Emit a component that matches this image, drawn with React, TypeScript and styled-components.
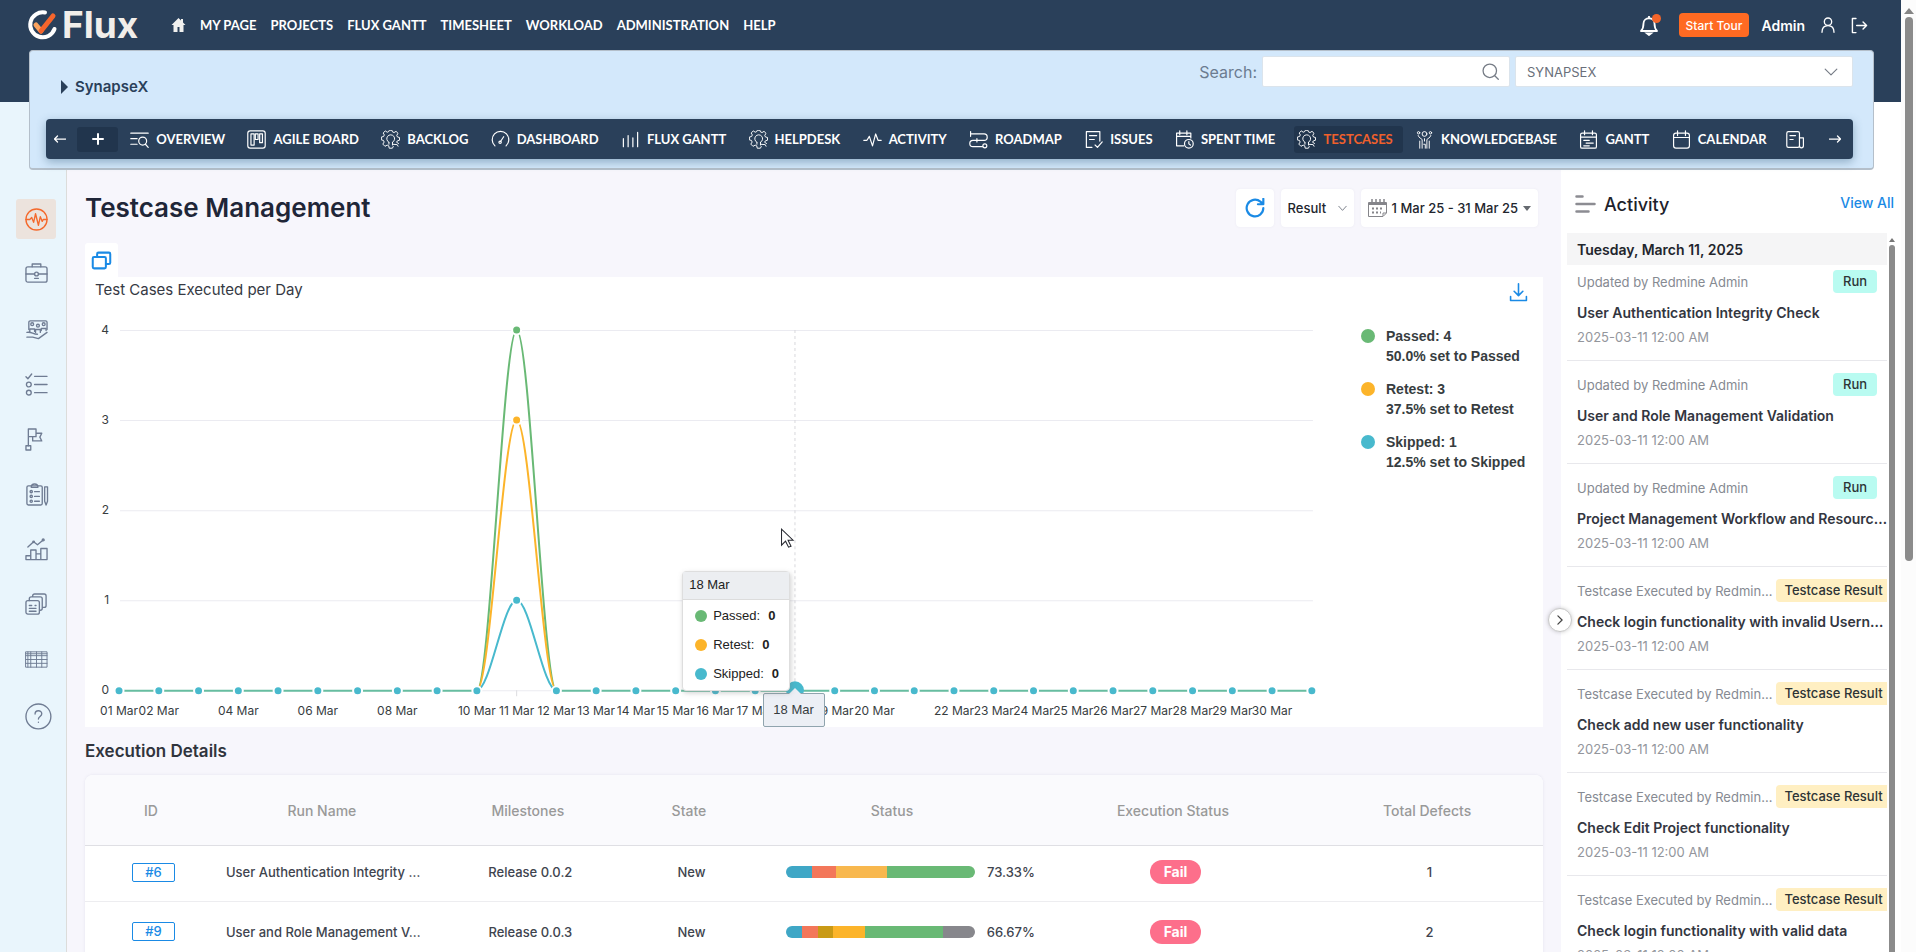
import React from "react";
import styled, { createGlobalStyle, css } from "styled-components";

const ui = `Inter, "Open Sans", sans-serif`;
const caps = `Lato, Inter, sans-serif`;
const arial = `"Liberation Sans", Arial, sans-serif`;
const navy = "#2a405a";
const blue = "#1a8ae5";
const green = "#69b975";
const amber = "#fcb42a";
const teal = "#48b9cd";

const GlobalStyle = createGlobalStyle`
  * { box-sizing: border-box; }
  body { margin: 0; font-family: ${ui}; color: #2c2f38; background: #fff; }
  button, input, select { font-family: inherit; border: 0; margin: 0; }
  button { cursor: pointer; padding: 0; background: none; color: inherit; }
  a { text-decoration: none; color: inherit; }
  h1, h2, p, ul { margin: 0; padding: 0; }
  ul { list-style: none; }
`;

/* ---------- shell ---------- */

const Page = styled.div`
  display: flex;
  height: 100vh;
  overflow: hidden;
`;

const Screen = styled.div`
  flex: 1;
  min-width: 0;
  display: flex;
  flex-direction: column;
`;

const ScrollTrack = styled.div`
  width: 15px;
  flex: none;
  padding: 8px 3px 0;
  background: #fcfcfc;
  display: flex;
  flex-direction: column;
  align-items: center;
  gap: 3px;
`;

const ScrollArrow = styled.span`
  border: 5px solid transparent;
  border-top: 0;
  border-bottom: 6px solid #858585;
`;

const ScrollThumb = styled.span<{ $height: string }>`
  width: 8px;
  height: ${(p) => p.$height};
  border-radius: 4px;
  background: #8b8b8b;
`;

const Header = styled.header`
  flex: none;
  height: 102px;
  background: ${navy};
`;

const TopBar = styled.div`
  height: 41px;
  padding: 0 33px 0 27px;
  display: flex;
  align-items: flex-end;
  color: #fff;
`;

const Logo = styled.a`
  display: flex;
  align-items: center;
  gap: 4px;
  height: 32px;
  width: 144px;
  font-size: 37px;
  line-height: 32px;
  font-weight: 700;
  color: #f1eeea;
`;

const MainMenu = styled.nav`
  display: flex;
  align-items: center;
  gap: 14px;
  height: 32px;
  flex: 1;
`;

const MenuLink = styled.a`
  display: flex;
  font-family: ${caps};
  font-size: 13px;
  line-height: 16px;
  font-weight: 700;
  white-space: nowrap;
`;

const UserArea = styled.div`
  display: flex;
  align-items: center;
  gap: 15px;
  height: 32px;
`;

const IconButton = styled.button`
  display: flex;
`;

const TourButton = styled.button`
  height: 24px;
  padding: 0 7px;
  border-radius: 4px;
  background: #ff6a22;
  color: #fff;
  font-size: 12px;
  font-weight: 500;
  margin: 0 -3px 0 3px;
`;

const AdminLink = styled.a`
  font-size: 14px;
  font-weight: 600;
`;

/* ---------- project bar ---------- */

const ProjectBar = styled.section`
  position: relative;
  z-index: 2;
  flex: none;
  height: 120px;
  margin: -52px 27px -68px 29px;
  padding: 5px 20px 9px 16px;
  border: 1px solid #b4bfca;
  border-bottom-width: 2px;
  border-radius: 4px;
  background: #d3e8fb;
  display: flex;
  flex-direction: column;
  justify-content: space-between;
`;

const ProjectTop = styled.div`
  display: flex;
  align-items: flex-start;
  gap: 5px;
`;

const ProjectName = styled.a`
  flex: 1;
  display: flex;
  align-items: center;
  gap: 7px;
  padding: 21px 0 0 15px;
  font-size: 15px;
  line-height: 20px;
  font-weight: 600;
  color: ${navy};
`;

const SearchLabel = styled.label`
  display: flex;
  align-items: center;
  gap: 5px;
  font-size: 16px;
  color: #6b7c90;
`;

const FieldWrap = styled.span<{ $wide?: boolean }>`
  position: relative;
  display: block;
  width: ${(p) => (p.$wide ? 338 : 248)}px;
`;

const fieldStyle = css`
  width: 100%;
  height: 31px;
  padding: 0 11px;
  border: 1px solid #dbe4ec;
  border-radius: 2px;
  background: #fff;
  color: #6a6f7a;
  font-size: 13px;
`;

const SearchInput = styled.input`
  ${fieldStyle}
`;

const ProjectSelect = styled.select`
  ${fieldStyle}
  appearance: none;
`;

const FieldIcon = styled.span<{ $right: number }>`
  position: absolute;
  right: ${(p) => p.$right}px;
  top: 0;
  bottom: 0;
  display: flex;
  align-items: center;
  pointer-events: none;
  color: #767c86;
`;

const TabBar = styled.nav`
  height: 40px;
  padding: 0 12px 0 8px;
  border-radius: 4px;
  background: ${navy};
  box-shadow: 0 3px 10px rgba(60, 100, 130, 0.45);
  color: #fff;
  display: flex;
  align-items: center;
`;

const TabList = styled.div`
  flex: 1;
  min-width: 0;
  margin: 0 24px 0 11px;
  display: flex;
  align-items: center;
  justify-content: space-between;
`;

const AddTab = styled.button`
  width: 41px;
  height: 25px;
  border-radius: 3px;
  background: #21354d;
  display: flex;
  align-items: center;
  justify-content: center;
`;

const Tab = styled.a<{ $active?: boolean }>`
  display: flex;
  align-items: center;
  gap: 7px;
  height: 27px;
  padding: 0 10px 0 3px;
  border-radius: 3px;
  font-family: ${caps};
  font-size: 13px;
  font-weight: 700;
  white-space: nowrap;
  background: ${(p) => (p.$active ? "#21354d" : "transparent")};
  color: ${(p) => (p.$active ? "#f0602c" : "#fff")};
  svg { color: #fff; flex: none; }
`;

/* ---------- body ---------- */

const Body = styled.div`
  flex: 1;
  min-height: 0;
  display: flex;
`;

const Sidebar = styled.nav`
  flex: none;
  width: 67px;
  padding: 97px 0 0 16px;
  border-right: 1px solid #dcdcda;
  background: #e9f5fc;
  display: flex;
  flex-direction: column;
  gap: 15px;
`;

const SideLink = styled.a<{ $active?: boolean }>`
  width: 40px;
  height: 40px;
  border-radius: 3px;
  display: flex;
  align-items: center;
  justify-content: center;
  background: ${(p) => (p.$active ? "#ece3dd" : "transparent")};
  color: ${(p) => (p.$active ? "#f4692c" : "#6f7c93")};
  svg { overflow: visible; }
`;

const Main = styled.main`
  flex: 1;
  min-width: 0;
  padding: 85px 18px 0;
  background: #f7f6fc;
  overflow: hidden;
`;

const TitleRow = styled.div`
  display: flex;
  align-items: center;
  height: 42px;
  gap: 7px;
  padding-right: 5px;
`;

const PageTitle = styled.h1`
  flex: 1;
  font-size: 26px;
  line-height: 32px;
  font-weight: 600;
  color: #1f2638;
`;

const Tile = styled.div`
  position: relative;
  height: 38px;
  border-radius: 4px;
  background: #fff;
  box-shadow: 0 0 2px rgba(120, 120, 160, 0.1);
  display: flex;
  align-items: center;
  font-size: 13px;
  font-weight: 500;
  color: #22252d;
  button { height: 100%; display: flex; align-items: center; }
`;

const RefreshButton = styled.button`
  width: 38px;
  justify-content: center;
  color: ${blue};
`;

const ResultSelect = styled.select`
  appearance: none;
  width: 73px;
  height: 38px;
  padding: 0 7px;
  background: transparent;
  font-size: 13px;
  font-weight: 500;
  color: inherit;
`;

const DateButton = styled.button`
  padding: 0 7px;
  gap: 5px;
  font-size: 13px;
  font-weight: 500;
  white-space: nowrap;
`;

const Caret = styled.span`
  border: 4px solid transparent;
  border-bottom: 0;
  border-top: 5px solid #666a70;
`;

const CopyTile = styled.button`
  display: flex;
  align-items: center;
  justify-content: center;
  width: 33px;
  height: 34px;
  margin-top: 14px;
  border-radius: 3px 3px 0 0;
  background: #fff;
  color: ${blue};
`;

const Card = styled.section`
  background: #fff;
`;

const CardHead = styled.div`
  display: flex;
  justify-content: space-between;
  align-items: flex-start;
  height: 39px;
  padding: 3px 15px 0 10px;
  font-size: 15px;
  line-height: 20px;
  color: #363a44;
  button { color: ${blue}; margin-top: 3px; }
`;

const CardBody = styled.div`
  display: flex;
`;

const ChartBox = styled.div`
  position: relative;
  flex: 1;
  min-width: 0;
  svg.plot { display: block; width: 100%; height: auto; }
`;

const Legend = styled.ul`
  flex: none;
  width: 182px;
  padding-top: 10px;
  display: flex;
  flex-direction: column;
  gap: 13px;
  font-family: ${arial};
  font-size: 14px;
  line-height: 20px;
  font-weight: 700;
  color: #373d3f;
`;

const LegendItem = styled.li`
  display: flex;
  gap: 11px;
  white-space: nowrap;
`;

const Dot = styled.span<{ $color: string; $size: number }>`
  flex: none;
  width: ${(p) => p.$size}px;
  height: ${(p) => p.$size}px;
  border-radius: 50%;
  background: ${(p) => p.$color};
`;

const LegendDot = styled(Dot)`
  margin: 3px 0;
`;

const Tooltip = styled.div`
  position: absolute;
  left: 46.8%;
  top: 62%;
  width: 108px;
  height: 120px;
  border: 1px solid #dedede;
  border-radius: 4px;
  background: #fff;
  box-shadow: 1px 2px 5px rgba(120, 120, 120, 0.35);
  font-family: ${arial};
  font-size: 13px;
  color: #222;
`;

const TooltipTitle = styled.div`
  height: 28px;
  line-height: 26px;
  padding-left: 6px;
  border-bottom: 1px solid #dcdcdc;
  background: #eceef1;
`;

const TooltipRow = styled.div`
  display: flex;
  align-items: center;
  gap: 6px;
  height: 29px;
  padding: 2px 0 0 12px;
  b { margin-left: 2px; }
`;

const AxisTooltip = styled.div`
  position: absolute;
  left: 53.1%;
  top: 91.7%;
  width: 62px;
  height: 34px;
  border: 1px solid #90a4ae;
  border-radius: 2px;
  background: #eceff5;
  text-align: center;
  font-family: ${arial};
  font-size: 13px;
  line-height: 32px;
  color: #373d3f;
  &::before {
    content: "";
    position: absolute;
    left: 25px;
    top: -6px;
    border: 6px solid transparent;
    border-top: 0;
    border-bottom-color: #eceff5;
  }
`;

const SectionTitle = styled.h2`
  margin: 12px 0;
  font-size: 17px;
  line-height: 24px;
  font-weight: 600;
  color: #30343d;
`;

const DataTable = styled.table`
  width: 100%;
  table-layout: fixed;
  border-collapse: collapse;
  border-radius: 8px 8px 0 0;
  background: #fff;
  box-shadow: 0 0 3px rgba(120, 120, 160, 0.15);
  font-size: 13px;
  th {
    height: 70px;
    padding: 0;
    border-bottom: 1px solid #dfdfe4;
    background: #fafafd;
    font-size: 14px;
    font-weight: 500;
    color: #999;
  }
  th:first-child { border-top-left-radius: 8px; }
  th:last-child { border-top-right-radius: 8px; }
  td {
    height: 56px;
    padding: 0 0 2px 5px;
    border-bottom: 1px solid #ededf0;
    text-align: center;
    font-weight: 500;
    color: #40444e;
  }
  tbody tr + tr td { height: 63px; }
`;

const IdTag = styled.a`
  display: inline-block;
  width: 43px;
  line-height: 17px;
  border: 1px solid ${blue};
  border-radius: 2px;
  font-size: 13px;
  font-weight: 500;
  color: ${blue};
`;

const RunName = styled.span`
  display: block;
  padding-left: 4px;
  text-align: left;
  white-space: nowrap;
`;

const StatusCell = styled.div`
  display: flex;
  align-items: center;
  gap: 12px;
  padding-left: 32px;
`;

const StatusBar = styled.div`
  display: flex;
  width: 189px;
  height: 12px;
  border-radius: 6px;
  overflow: hidden;
`;

const Segment = styled.span<{ $color: string; $share: number }>`
  flex: ${(p) => p.$share};
  background: ${(p) => p.$color};
`;

const FailBadge = styled.span`
  display: inline-block;
  width: 51px;
  line-height: 24px;
  border-radius: 12px;
  background: #fd6f8b;
  font-size: 14px;
  font-weight: 700;
  color: #fff;
`;

/* ---------- activity ---------- */

const Activity = styled.aside`
  position: relative;
  flex: none;
  width: 340px;
  padding: 82px 5px 0 6px;
  background: #fff;
  display: flex;
  flex-direction: column;
`;

const CollapseButton = styled.button`
  position: absolute;
  left: -13px;
  top: 506px;
  width: 24px;
  height: 24px;
  border: 1px solid #c9c9c9;
  border-radius: 50%;
  background: #fff;
  box-shadow: 0 0 4px rgba(0, 0, 0, 0.2);
  color: #444;
  display: flex;
  align-items: center;
  justify-content: center;
`;

const ActivityHead = styled.div`
  flex: none;
  display: flex;
  align-items: center;
  gap: 8px;
  height: 40px;
  margin-bottom: 9px;
  padding: 0 2px 0 8px;
  font-size: 14px;
  font-weight: 500;
  h2 { flex: 1; font-size: 18px; font-weight: 500; color: #1e222b; }
  a { color: ${blue}; padding-bottom: 4px; }
`;

const ActivityScroll = styled.div`
  flex: 1;
  min-height: 0;
  display: flex;
  gap: 1px;
`;

const ActivityList = styled.div`
  flex: 1;
  min-width: 0;
  overflow: hidden;
`;

const InnerTrack = styled.div`
  width: 8px;
  padding-top: 5px;
  display: flex;
  flex-direction: column;
  align-items: center;
  gap: 3px;
  span { flex: none; }
  span + span { width: 6px; border-radius: 3px 3px 0 0; }
`;

const SmallArrow = styled.span`
  border: 3px solid transparent;
  border-top: 0;
  border-bottom: 4px solid #777;
`;

const DateHead = styled.div`
  height: 32px;
  padding-left: 10px;
  background: #f5f5f6;
  font-size: 14px;
  line-height: 34px;
  font-weight: 600;
  color: #22252d;
`;

const Entry = styled.article<{ $first: boolean }>`
  padding: ${(p) => (p.$first ? 5 : 12)}px 0 14px 10px;
  border-bottom: 1px solid #e8e8ec;
`;

const EntryTop = styled.div`
  display: flex;
  align-items: center;
  justify-content: space-between;
  height: 23px;
  font-size: 13px;
  color: #868a92;
  white-space: nowrap;
`;

const Badge = styled.span<{ $run: boolean }>`
  flex: none;
  width: ${(p) => (p.$run ? 44 : 111)}px;
  margin-right: ${(p) => (p.$run ? 10 : 0)}px;
  padding-left: ${(p) => (p.$run ? 0 : 4)}px;
  line-height: 23px;
  border-radius: ${(p) => (p.$run ? "4px" : "4px 0 0 4px")};
  background: ${(p) => (p.$run ? "#b9fbf1" : "#ffefc2")};
  text-align: center;
  font-weight: 500;
  color: #2d3436;
`;

const EntryTitle = styled.p`
  margin-top: 10px;
  font-size: 14px;
  line-height: 20px;
  font-weight: 600;
  color: #33363f;
  white-space: nowrap;
`;

const EntryDate = styled.p`
  margin-top: 5px;
  font-size: 13px;
  line-height: 18px;
  color: #93969c;
`;

/* ---------- icons ---------- */

type IconProps = { size?: number; width?: number; children: React.ReactNode };

const Icon = ({ size = 18, width = 1.5, children }: IconProps) => (
  <svg width={size} height={size} viewBox="0 0 24 24" fill="none" stroke="currentColor"
    strokeWidth={width} strokeLinecap="round" strokeLinejoin="round" aria-hidden="true">
    {children}
  </svg>
);

const gear = (
  <g strokeWidth="1.2">
    <path d="M15.500 20.800 14.400 23h-4l-.6-3-2-.9L5 20.600 2.300 17.800 4 15.200l-.9-2L.5 12.500V8.900l2.800-.7.9-2-1.500-2.400L5.400 1.200l2.500 1.600 2-.9.6-1.600h3.300l.7 2.100 2 .8L19 1.700l2.500 2.500-1.600 2.600.9 2 2.600.7v3.400l-2.700.8-1 1.800 2.500 1.500" />
    <path d="M10 15.600V18M14.500 15.600V19M10 15.600a5 5 0 1 1 4.500 0M14.500 18l6 .5 1 2" />
  </g>
);

const tabIcons: Record<string, React.ReactNode> = {
  overview: (<><path d="M1 4h22M1 11h8M1 18h8" /><circle cx="16" cy="14" r="5" /><path d="m19.500 18 3.500 4" /></>),
  board: (<><rect x="1" y="1" width="22" height="22" rx="3" /><rect x="5" y="5" width="4" height="14" /><rect x="10.500" y="5" width="3.500" height="7" /><rect x="16" y="5" width="3.500" height="11" /></>),
  gear,
  dial: (<><path d="M5 20a10.500 10.500 0 1 1 14 0" /><path d="m16 8.500-4 6" /><circle cx="11.500" cy="15.500" r="1.500" /></>),
  bars: <path d="M3 11v10M9 7v14M15 10v11M21 3v18" />,
  pulse: <path d="M1 13h4l3-5 4 12 4-15 3 8h4" />,
  road: (<><path d="M2 2v6M2 5h17a4 4 0 0 1 0 8H5a3.500 3.500 0 0 0 0 8h12M10 11v4" /><circle cx="20" cy="20" r="2.500" /></>),
  issues: (<><path d="M10 22H3V2h17v12M7 7h9M7 12h6" /><path d="m14 19 3 3 6-7" /></>),
  time: (<><path d="M11 20H2V4h18v6M2 8h18M6 1v5M15 1v5" /><circle cx="17.500" cy="17.500" r="5.500" /><path d="M17.500 14.500v3l2 1.500" /></>),
  people: (<g strokeWidth="1.2"><circle cx="12" cy="5" r="3" /><circle cx="4.500" cy="3.500" r="1.500" /><circle cx="19.500" cy="3.500" r="1.500" /><path d="M4 7c1 3 4 4 5 5v11M20 7c-1 3-4 4-5 5v11M12 11v3M11 18h2v5M6 14v9M18 14v9" /></g>),
  gantt: (<><rect x="2" y="4" width="20" height="19" rx="2" /><path d="M2 9h20M7 1v5M17 1v5M6 13h7M9 16.500h9M6 20h7" /></>),
  calendar: (<><rect x="2" y="4" width="20" height="19" rx="3" /><path d="M2 9.500h20M7 1v6M17 1v6" /></>),
  news: (<><rect x="1" y="2" width="16" height="20" rx="2" /><path d="M17 10h5v10a2 2 0 0 1-5 0M5 7h7M5 12h4" /></>),
};

const tabs: { icon: string; label: string; active?: boolean }[] = [
  { icon: "overview", label: "OVERVIEW" },
  { icon: "board", label: "AGILE BOARD" },
  { icon: "gear", label: "BACKLOG" },
  { icon: "dial", label: "DASHBOARD" },
  { icon: "bars", label: "FLUX GANTT" },
  { icon: "gear", label: "HELPDESK" },
  { icon: "pulse", label: "ACTIVITY" },
  { icon: "road", label: "ROADMAP" },
  { icon: "issues", label: "ISSUES" },
  { icon: "time", label: "SPENT TIME" },
  { icon: "gear", label: "TESTCASES", active: true },
  { icon: "people", label: "KNOWLEDGEBASE" },
  { icon: "gantt", label: "GANTT" },
  { icon: "calendar", label: "CALENDAR" },
];

const sideItems: { label: string; art: React.ReactNode }[] = [
  { label: "Activity", art: (<><circle cx="12" cy="12" r="11" /><path d="M1 12h4l2-2 2 5 2-9 3 12 2-9 2 5 1-2h4" /></>) },
  { label: "Portfolio", art: (<><rect x="1" y="4" width="22" height="16" rx="2" /><path d="M7.500 4V1h9v3M1 11.500h9M14 11.500h9M10 16h4" /><circle cx="12" cy="11.500" r="2" /></>) },
  { label: "Resources", art: (<><path d="M4 12V4.500A1.500 1.500 0 0 1 5.500 3h16A1.500 1.500 0 0 1 23 4.500V12" /><circle cx="7.500" cy="6.500" r="1.500" /><circle cx="13.500" cy="8" r="1.500" /><circle cx="19.500" cy="6.500" r="1.500" /><path d="M5 14v-2.500h5V14M11 15v-3h5v3M17 13v-2h5v2M2 15c5-1 6 2 11 2M2 20h6l6 1.500 9-6.500" /></>) },
  { label: "Checklist", art: (<><path d="m1 4 2 2 4-5M10 3.500h13M10 12h13M10 20.500h13" /><circle cx="4" cy="12" r="2.500" /><circle cx="4" cy="20.500" r="2.500" /></>) },
  { label: "Milestones", art: (<><rect x="1" y="18.500" width="5" height="4.500" /><path d="M3.500 18.500V1h8v8h-8M11.500 5.500h6l-2 4 2 4H8V9" /></>) },
  { label: "Tests", art: (<><rect x="2" y="3" width="16" height="20" rx="1.500" /><path d="M6.500 4.500C6.500 2 8 1 10 1s3.500 1 3.500 3.500zM10 9h5M10 14h5M10 19h5M20.500 4h3v15L22 23l-1.500-4z" /><circle cx="6.500" cy="9" r="1.200" /><circle cx="6.500" cy="14" r="1.200" /><circle cx="6.500" cy="19" r="1.200" /></>) },
  { label: "Reports", art: (<><path d="M1 22.500v-4h5v-6h5.500v4h5V11H23v11.500zM6 18.500v4M11.500 16v6M16.500 16v6" /><path d="M3 9.500 9 4l4 3 6-5" /><circle cx="9" cy="4" r=".8" /><circle cx="19" cy="2" r="1" /></>) },
  { label: "Documents", art: (<><rect x="1" y="8" width="14" height="14" rx="2" /><path d="M4.500 8V6a2 2 0 0 1 2-2H16a2 2 0 0 1 2 2v10a2 2 0 0 1-2 2M8 4V3a2 2 0 0 1 2-2h10a2 2 0 0 1 2 2v10a2 2 0 0 1-2 2h-1M4.500 13H7M10.500 13h1M4.500 16h7M4.500 19h7" /></>) },
  { label: "Tables", art: (<g strokeWidth="1"><path d="M1 4h22v16H1z M1 8h22M1 12h22M1 16h22M6 4v16M12 4v16M17.500 4v16" /><path d="M1 6h22M3 4v16" /></g>) },
  { label: "Help", art: (<g transform="translate(2 2)"><circle cx="12" cy="12" r="13" /><path d="M8.500 9.500c0-4.500 7-4.500 7-.3 0 2.800-3.500 2.800-3.500 5.500M12 18v.2" /></g>) },
];

const entries = [
  { by: "Updated by Redmine Admin", kind: "Run", title: "User Authentication Integrity Check" },
  { by: "Updated by Redmine Admin", kind: "Run", title: "User and Role Management Validation" },
  { by: "Updated by Redmine Admin", kind: "Run", title: "Project Management Workflow and Resourc…" },
  { by: "Testcase Executed by Redmin…", kind: "Testcase Result", title: "Check login functionality with invalid Usern…" },
  { by: "Testcase Executed by Redmin…", kind: "Testcase Result", title: "Check add new user functionality" },
  { by: "Testcase Executed by Redmin…", kind: "Testcase Result", title: "Check Edit Project functionality" },
  { by: "Testcase Executed by Redmin…", kind: "Testcase Result", title: "Check login functionality with valid data" },
];

const legend = [
  { name: "Passed", count: 4, share: "50.0%", color: green },
  { name: "Retest", count: 3, share: "37.5%", color: amber },
  { name: "Skipped", count: 1, share: "12.5%", color: teal },
];

const runs = [
  {
    id: "#6", name: "User Authentication Integrity …", milestone: "Release 0.0.2", percent: "73.33%", defects: 1,
    parts: [["#3fa7c6", 26], ["#f3775a", 24], ["#f8b84e", 51], [green, 88]] as [string, number][],
  },
  {
    id: "#9", name: "User and Role Management V…", milestone: "Release 0.0.3", percent: "66.67%", defects: 2,
    parts: [["#3fa7c6", 16], ["#f3775a", 16], ["#c99a16", 15], [amber, 32], [green, 78], ["#87878c", 32]] as [string, number][],
  },
];

/* ---------- chart ---------- */

const X0 = 34;
const STEP = 39.73;
const BASE = 374;
const UNIT = 90;
const PEAK = 10;
const xAt = (day: number) => X0 + day * STEP;
const hiddenLabels = [3, 5, 7, 9, 21, 31];

const bell = (value: number) => {
  const top = BASE - value * UNIT;
  const a = xAt(PEAK - 1);
  const m = xAt(PEAK);
  const b = xAt(PEAK + 1);
  const k = STEP / 3;
  return `M${a} ${BASE}C${a + k} ${BASE} ${m - k} ${top} ${m} ${top}S${b - k} ${BASE} ${b} ${BASE}`;
};

const Plot = () => (
  <svg className="plot" viewBox="0 0 1275 411" fontFamily={ui} fontSize="12" fill="#373d3f">
    {[0, 1, 2, 3, 4].map((n) => (
      <g key={n}>
        <path d={`M35 ${BASE - n * UNIT + 0.5}H1227`} stroke="#ebebf1" />
        <text x="24" y={BASE - n * UNIT + 4} textAnchor="end">{n}</text>
      </g>
    ))}
    <path d={`M${xAt(17)} 14V${BASE}`} stroke="#d8d8dc" strokeDasharray="3 3" />
    <path d={`M${xAt(10)} ${BASE}v6`} stroke="#dcdce0" />
    <g fill="none" strokeWidth="2">
      <path d={`M${xAt(0)} ${BASE + 0.5}H${xAt(9)}M${xAt(11)} ${BASE + 0.5}H${xAt(30)}`} stroke="#67bda0" />
      <path d={bell(4)} stroke={green} />
      <path d={bell(3)} stroke={amber} />
      <path d={bell(1)} stroke={teal} />
    </g>
    <g stroke="#fff" strokeWidth="2" fill={teal}>
      {Array.from({ length: 31 }, (_, d) => (d === PEAK || d === 17 ? null : <circle key={d} cx={xAt(d)} cy={BASE + 0.5} r="4.500" />))}
      <circle cx={xAt(10)} cy={BASE - 4 * UNIT} r="4.500" fill={green} />
      <circle cx={xAt(10)} cy={BASE - 3 * UNIT} r="4.500" fill={amber} />
      <circle cx={xAt(10)} cy={BASE - UNIT} r="4.500" />
    </g>
    <circle cx={xAt(17)} cy={BASE} r="9" fill={teal} />
    {Array.from({ length: 31 }, (_, d) => d + 1)
      .filter((d) => !hiddenLabels.includes(d))
      .map((d) => (
        <text key={d} x={xAt(d - 1)} y="399" textAnchor="middle">{`${String(d).padStart(2, "0")} Mar`}</text>
      ))}
    <path d="M696 213v16l4-4 3 6 2.500-1-3-6h5z" fill="#fff" stroke="#22242c" />
  </svg>
);

export default function App() {
  return (
    <Page>
      <GlobalStyle />
      <Screen>
        <Header>
          <TopBar>
            <Logo href="#">
              <svg width="31" height="32" viewBox="0 0 31 32" fill="none" strokeLinecap="round" aria-hidden="true">
                <path d="M18 3.500A12.500 12.500 0 1 0 27.500 20" stroke="#fff" strokeWidth="4" />
                <path d="m9 16 5 6" stroke="#fba35e" strokeWidth="5" />
                <path d="M14 22 26 7" stroke="#f5652c" strokeWidth="5" />
              </svg>
              Flux
            </Logo>
            <MainMenu>
              <MenuLink href="#" aria-label="Home">
                <svg width="15" height="14" viewBox="0 0 14 14" fill="#f1f1ef" aria-hidden="true">
                  <path d="M7 0 0 7h2v7h4V9h2v5h4V7h2l-2.500-2.500V1H9.500v1.500z" />
                </svg>
              </MenuLink>
              {["MY PAGE", "PROJECTS", "FLUX GANTT", "TIMESHEET", "WORKLOAD", "ADMINISTRATION", "HELP"].map((m) => (
                <MenuLink key={m} href="#">{m}</MenuLink>
              ))}
            </MainMenu>
            <UserArea>
              <IconButton aria-label="Notifications">
                <svg width="22" height="22" viewBox="0 0 22 22" fill="none" stroke="#fff" strokeWidth="1.800" aria-hidden="true">
                  <path d="M2 17h16c-2-2-2.500-4-2.500-7.500 0-7-11-7-11 0C4.500 13 4 15 2 17z" strokeLinejoin="round" />
                  <path d="M8 19.500h4l-2 1.500zM10 4V2" />
                  <circle cx="17.500" cy="4.500" r="4.500" fill="#f4652a" stroke="none" />
                </svg>
              </IconButton>
              <TourButton>Start Tour</TourButton>
              <AdminLink href="#">Admin</AdminLink>
              <IconButton aria-label="Account">
                <Icon size={16} width={2}><circle cx="12" cy="7" r="5.500" /><path d="M3 23c0-6 3-10 9-10s9 4 9 10" /></Icon>
              </IconButton>
              <IconButton aria-label="Sign out">
                <Icon size={17} width={2}><path d="M7 2H2v20h5M8 12h14M17 7l5 5-5 5" /></Icon>
              </IconButton>
            </UserArea>
          </TopBar>
        </Header>

        <ProjectBar>
          <ProjectTop>
            <ProjectName href="#">
              <svg width="7" height="14" viewBox="0 0 7 14" fill={navy} aria-hidden="true"><path d="M0 0v14l7-7z" /></svg>
              SynapseX
            </ProjectName>
            <SearchLabel>
              Search:
              <FieldWrap>
                <SearchInput type="text" />
                <FieldIcon $right={11}>
                  <Icon size={17} width={1.8}><circle cx="11" cy="11" r="9.500" /><path d="m18 18 5 5" /></Icon>
                </FieldIcon>
              </FieldWrap>
            </SearchLabel>
            <FieldWrap $wide>
              <ProjectSelect aria-label="Project"><option>SYNAPSEX</option></ProjectSelect>
              <FieldIcon $right={15}>
                <Icon size={14} width={2}><path d="m2 7 10 10L22 7" /></Icon>
              </FieldIcon>
            </FieldWrap>
          </ProjectTop>
          <TabBar>
            <IconButton aria-label="Previous tabs"><Icon size={12} width={2.5}><path d="M23 12H1M7 6l-6 6 6 6" /></Icon></IconButton>
            <TabList>
              <AddTab aria-label="Add"><Icon size={12} width={4}><path d="M12 2v20M2 12h20" /></Icon></AddTab>
              {tabs.map((t) => (
                <Tab key={t.label} href="#" $active={t.active}>
                  <Icon size={19}>{tabIcons[t.icon]}</Icon>
                  {t.label}
                </Tab>
              ))}
              <IconButton aria-label="News"><Icon size={19}>{tabIcons.news}</Icon></IconButton>
            </TabList>
            <IconButton aria-label="Next tabs"><Icon size={12} width={2.5}><path d="M1 12h22M17 6l6 6-6 6" /></Icon></IconButton>
          </TabBar>
        </ProjectBar>

        <Body>
          <Sidebar>
            {sideItems.map((s, i) => (
              <SideLink key={s.label} href="#" aria-label={s.label} $active={i === 0}>
                <Icon size={23} width={1.4}>{s.art}</Icon>
              </SideLink>
            ))}
          </Sidebar>

          <Main>
            <TitleRow>
              <PageTitle>Testcase Management</PageTitle>
              <Tile>
                <RefreshButton aria-label="Refresh">
                  <Icon size={20} width={2.6}><path d="M22 12a10 10 0 1 1-3.500-7.600L21.500 7M22 1v6.500h-6.500" /></Icon>
                </RefreshButton>
              </Tile>
              <Tile>
                <ResultSelect aria-label="Result"><option>Result</option></ResultSelect>
                <FieldIcon $right={7}>
                  <Icon size={9} width={2.5}><path d="m2 6 10 11L22 6" /></Icon>
                </FieldIcon>
              </Tile>
              <Tile>
                <DateButton>
                  <svg width="19" height="18" viewBox="0 0 19 18" fill="none" stroke="#85858a" aria-hidden="true">
                    <path d="M.5 3.500h18V14l-3.500 3.500H.5z" />
                    <path d="M1 4.500h17" strokeWidth="3" />
                    <path d="M4 0v4M8 0v4M12 0v4M16 0v4" strokeWidth="1.500" />
                    <path d="M4 9.500h12M4 13.500h9" strokeWidth="2" strokeDasharray="2 2" />
                    <path d="M15 17v-3h3" />
                  </svg>
                  1 Mar 25 - 31 Mar 25
                  <Caret />
                </DateButton>
              </Tile>
            </TitleRow>

            <CopyTile aria-label="Copy">
              <Icon size={21} width={2.3}><rect x="2" y="8" width="15" height="13" rx="1.500" /><path d="M7 8V4.500A1.500 1.500 0 0 1 8.500 3h12A1.500 1.500 0 0 1 22 4.500v10a1.500 1.500 0 0 1-1.500 1.500H17" /></Icon>
            </CopyTile>

            <Card>
              <CardHead>
                Test Cases Executed per Day
                <IconButton aria-label="Download">
                  <Icon size={19} width={2}><path d="M2 17v5h20v-5M12 1v15M6.500 10.500 12 16l5.500-5.500" /></Icon>
                </IconButton>
              </CardHead>
              <CardBody>
                <ChartBox>
                  <Plot />
                  <AxisTooltip>18 Mar</AxisTooltip>
                  <Tooltip>
                    <TooltipTitle>18 Mar</TooltipTitle>
                    {legend.map((l) => (
                      <TooltipRow key={l.name}>
                        <Dot $color={l.color} $size={12} />
                        {l.name}: <b>0</b>
                      </TooltipRow>
                    ))}
                  </Tooltip>
                </ChartBox>
                <Legend>
                  {legend.map((l) => (
                    <LegendItem key={l.name}>
                      <LegendDot $color={l.color} $size={14} />
                      <span>
                        {l.name}: {l.count}
                        <br />
                        {l.share} set to {l.name}
                      </span>
                    </LegendItem>
                  ))}
                </Legend>
              </CardBody>
            </Card>

            <SectionTitle>Execution Details</SectionTitle>
            <DataTable>
              <colgroup>
                <col width="9.050%" /><col width="14.400%" /><col width="13.850%" /><col width="8.250%" />
                <col width="19.600%" /><col width="18.950%" /><col width="15.900%" />
              </colgroup>
              <thead>
                <tr>
                  {["ID", "Run Name", "Milestones", "State", "Status", "Execution Status", "Total Defects"].map((h) => (
                    <th key={h} scope="col">{h}</th>
                  ))}
                </tr>
              </thead>
              <tbody>
                {runs.map((r) => (
                  <tr key={r.id}>
                    <td><IdTag href="#">{r.id}</IdTag></td>
                    <td><RunName>{r.name}</RunName></td>
                    <td>{r.milestone}</td>
                    <td>New</td>
                    <td>
                      <StatusCell>
                        <StatusBar>
                          {r.parts.map(([color, share]) => <Segment key={color} $color={color} $share={share} />)}
                        </StatusBar>
                        {r.percent}
                      </StatusCell>
                    </td>
                    <td><FailBadge>Fail</FailBadge></td>
                    <td>{r.defects}</td>
                  </tr>
                ))}
              </tbody>
            </DataTable>
          </Main>

          <Activity>
            <CollapseButton aria-label="Collapse activity">
              <Icon size={10} width={3}><path d="m7 2 10 10L7 22" /></Icon>
            </CollapseButton>
            <ActivityHead>
              <svg width="21" height="18" viewBox="0 0 21 18" stroke="#8c8c92" strokeWidth="2.500" strokeLinecap="round" aria-hidden="true">
                <path d="M1.500 1.500h6M1.500 9h18M1.500 16.500h12" />
              </svg>
              <h2>Activity</h2>
              <a href="#">View All</a>
            </ActivityHead>
            <ActivityScroll>
              <ActivityList>
                <DateHead>Tuesday, March 11, 2025</DateHead>
                {entries.map((e, i) => (
                  <Entry key={e.title} $first={i === 0}>
                    <EntryTop>
                      {e.by}
                      <Badge $run={e.kind === "Run"}>{e.kind}</Badge>
                    </EntryTop>
                    <EntryTitle>{e.title}</EntryTitle>
                    <EntryDate>2025-03-11 12:00 AM</EntryDate>
                  </Entry>
                ))}
              </ActivityList>
              <InnerTrack>
                <SmallArrow />
                <ScrollThumb $height="100%" />
              </InnerTrack>
            </ActivityScroll>
          </Activity>
        </Body>
      </Screen>
      <ScrollTrack>
        <ScrollArrow />
        <ScrollThumb $height="544px" />
      </ScrollTrack>
    </Page>
  );
}
